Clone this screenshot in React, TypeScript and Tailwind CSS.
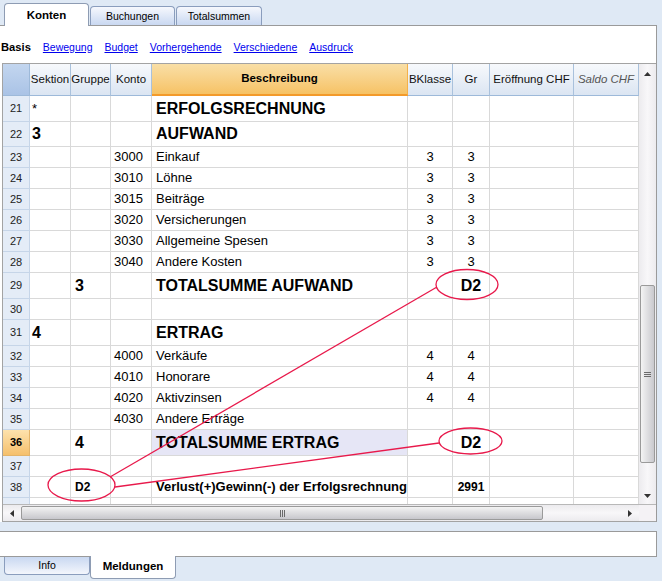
type Row = {
  n: number;
  h: string;
  sek?: string;
  grp?: string;
  konto?: string;
  besch?: string;
  bk?: string;
  gr?: string;
  big?: boolean;
  bold?: boolean;
  active?: boolean;
};

const rows: Row[] = [
  { n: 21, h: 'h-[26px]', sek: '*', besch: 'ERFOLGSRECHNUNG', big: true },
  { n: 22, h: 'h-[25px]', sek: '3', besch: 'AUFWAND', big: true },
  { n: 23, h: 'h-[21px]', konto: '3000', besch: 'Einkauf', bk: '3', gr: '3' },
  { n: 24, h: 'h-[21px]', konto: '3010', besch: 'Löhne', bk: '3', gr: '3' },
  { n: 25, h: 'h-[21px]', konto: '3015', besch: 'Beiträge', bk: '3', gr: '3' },
  { n: 26, h: 'h-[21px]', konto: '3020', besch: 'Versicherungen', bk: '3', gr: '3' },
  { n: 27, h: 'h-[21px]', konto: '3030', besch: 'Allgemeine Spesen', bk: '3', gr: '3' },
  { n: 28, h: 'h-[21px]', konto: '3040', besch: 'Andere Kosten', bk: '3', gr: '3' },
  { n: 29, h: 'h-[26px]', grp: '3', besch: 'TOTALSUMME AUFWAND', gr: 'D2', big: true },
  { n: 30, h: 'h-[21px]' },
  { n: 31, h: 'h-[26px]', sek: '4', besch: 'ERTRAG', big: true },
  { n: 32, h: 'h-[21px]', konto: '4000', besch: 'Verkäufe', bk: '4', gr: '4' },
  { n: 33, h: 'h-[21px]', konto: '4010', besch: 'Honorare', bk: '4', gr: '4' },
  { n: 34, h: 'h-[21px]', konto: '4020', besch: 'Aktivzinsen', bk: '4', gr: '4' },
  { n: 35, h: 'h-[21px]', konto: '4030', besch: 'Andere Erträge' },
  { n: 36, h: 'h-[26px]', grp: '4', besch: 'TOTALSUMME ERTRAG', gr: 'D2', big: true, active: true },
  { n: 37, h: 'h-[21px]' },
  { n: 38, h: 'h-[21px]', grp: 'D2', besch: 'Verlust(+)Gewinn(-) der Erfolgsrechnung', gr: '2991', bold: true },
];

const line = 'border-r border-b border-[#d9d9d9]';

function Arrow({ dir }: { dir: 'up' | 'down' | 'left' | 'right' }) {
  const pts = {
    up: '0,4 3.5,0 7,4',
    down: '0,0 3.5,4 7,0',
    left: '4,0 0,3.5 4,7',
    right: '0,0 4,3.5 0,7',
  }[dir];
  const vert = dir === 'up' || dir === 'down';
  return (
    <svg width={vert ? 7 : 4} height={vert ? 4 : 7}>
      <polygon points={pts} fill="#333" />
    </svg>
  );
}

function DataRow({ r }: { r: Row }) {
  const big = r.big ? 'text-[16px] font-bold' : r.bold ? 'text-[13px] font-bold' : 'text-[13px]';
  const small = r.bold ? 'text-[12px] font-bold' : big;
  return (
    <div className={`flex shrink-0 ${r.h}`}>
      <div
        className={`w-[27px] shrink-0 flex items-center justify-center border-r border-b text-[11px] ${
          r.active
            ? 'bg-gradient-to-b from-[#fde2ad] to-[#f5c06c] border-[#e3b46a] font-bold'
            : 'bg-[#e4ecf7] border-[#c6d5e8] text-[#222]'
        }`}
      >
        {r.n}
      </div>
      <div className={`w-[41px] shrink-0 flex items-center pl-[2px] ${line} ${r.sek === '*' ? 'text-[13px]' : big}`}>{r.sek}</div>
      <div className={`w-[40px] shrink-0 flex items-center pl-[4px] ${line} ${small}`}>{r.grp}</div>
      <div className={`w-[41px] shrink-0 flex items-center pl-[3px] ${line} text-[13px]`}>{r.konto}</div>
      <div className={`w-[256px] shrink-0 flex items-center pl-[4px] whitespace-nowrap ${line} ${big} ${r.active ? 'bg-[#e6e6f6]' : ''}`}>
        {r.besch}
      </div>
      <div className={`w-[45px] shrink-0 flex items-center justify-center ${line} text-[13px]`}>{r.bk}</div>
      <div className={`w-[37px] shrink-0 flex items-center justify-center ${line} ${small}`}>{r.gr}</div>
      <div className={`w-[84px] shrink-0 ${line}`} />
      <div className={`w-[65px] shrink-0 ${line}`} />
    </div>
  );
}

// partially visible row under the last one, cut by the scrollbar
function EmptyRow() {
  return (
    <div className="flex shrink-0 h-[21px]">
      <div className="w-[27px] shrink-0 bg-[#e4ecf7] border-r border-b border-[#c6d5e8]" />
      <div className={`w-[41px] shrink-0 ${line}`} />
      <div className={`w-[40px] shrink-0 ${line}`} />
      <div className={`w-[41px] shrink-0 ${line}`} />
      <div className={`w-[256px] shrink-0 ${line}`} />
      <div className={`w-[45px] shrink-0 ${line}`} />
      <div className={`w-[37px] shrink-0 ${line}`} />
      <div className={`w-[84px] shrink-0 ${line}`} />
      <div className={`w-[65px] shrink-0 ${line}`} />
    </div>
  );
}

const headers = [
  { label: 'Sektion', w: 'w-[41px]' },
  { label: 'Gruppe', w: 'w-[40px]' },
  { label: 'Konto', w: 'w-[41px]' },
  { label: 'Beschreibung', w: 'w-[256px]' },
  { label: 'BKlasse', w: 'w-[45px]' },
  { label: 'Gr', w: 'w-[37px]' },
  { label: 'Eröffnung CHF', w: 'w-[84px]' },
  { label: 'Saldo CHF', w: 'w-[65px]' },
];

function Header() {
  return (
    <div className="flex h-[32px] shrink-0 text-[11.5px]">
      <div className="w-[27px] shrink-0 bg-gradient-to-b from-[#c3d6ef] to-[#aac3e6] border-r border-b border-[#9db9d9]" />
      {headers.map((h) =>
        h.label === 'Beschreibung' ? (
          <div
            key={h.label}
            className={`${h.w} shrink-0 flex items-center justify-center font-bold bg-gradient-to-b from-[#f9dfa6] to-[#f6c264] border-r border-b-2 border-r-[#f3b14a] border-b-[#f39a2a]`}
          >
            {h.label}
          </div>
        ) : (
          <div
            key={h.label}
            className={`${h.w} shrink-0 flex items-center justify-center whitespace-nowrap bg-gradient-to-b from-[#f7f9fc] to-[#dbe5f2] border-r border-b border-r-[#a9c1dc] border-b-[#9db9d9] ${
              h.label === 'Saldo CHF' ? 'italic text-[#555]' : 'text-[#111]'
            }`}
          >
            {h.label}
          </div>
        )
      )}
    </div>
  );
}

function VScroll() {
  return (
    <div className="w-[17px] shrink-0 flex flex-col bg-gradient-to-r from-[#ecebee] via-[#f8f7f9] to-[#ecebee]">
      <div className="h-[17px] shrink-0 flex items-center justify-center pt-[2px]">
        <Arrow dir="up" />
      </div>
      <div className="h-[204px] shrink-0" />
      <div className="h-[178px] shrink-0 mx-[1px] rounded-[2px] border border-[#9a9a9a] bg-gradient-to-r from-[#f4f4f4] to-[#c9c9ce] flex flex-col items-center justify-center gap-[1px]">
        <div className="w-[7px] h-[1px] bg-[#6b6b6b]" />
        <div className="w-[7px] h-[1px] bg-[#6b6b6b]" />
        <div className="w-[7px] h-[1px] bg-[#6b6b6b]" />
      </div>
      <div className="flex-1" />
      <div className="h-[17px] shrink-0 flex items-center justify-center">
        <Arrow dir="down" />
      </div>
    </div>
  );
}

function HScroll() {
  return (
    <div className="flex h-[17px] shrink-0 border-t border-[#b8b8b8] bg-gradient-to-b from-[#ecebee] via-[#f8f7f9] to-[#ecebee]">
      <div className="w-[18px] shrink-0 flex items-center justify-center">
        <Arrow dir="left" />
      </div>
      <div className="w-[522px] shrink-0 my-[1px] rounded-[2px] border border-[#9a9a9a] bg-gradient-to-b from-[#f3f3f3] to-[#c7c7cc] flex items-center justify-center gap-[1px]">
        <div className="w-[1px] h-[7px] bg-[#6b6b6b]" />
        <div className="w-[1px] h-[7px] bg-[#6b6b6b]" />
        <div className="w-[1px] h-[7px] bg-[#6b6b6b]" />
      </div>
      <div className="flex-1" />
      <div className="w-[18px] shrink-0 flex items-center justify-center">
        <Arrow dir="right" />
      </div>
      <div className="w-[17px] shrink-0 bg-[#f4f2f5]" />
    </div>
  );
}

export default function App() {
  return (
    <div className="relative w-[662px] h-[581px] overflow-hidden bg-[#dfe9f5] font-['Liberation_Sans',Arial,sans-serif] text-black flex flex-col">
      {/* top tabs */}
      <div className="h-[25px] shrink-0 flex items-end pl-[4px] gap-[1px]">
        <div className="relative z-10 w-[85px] h-[23px] -mb-[1px] bg-white border border-b-0 border-[#8e9cb3] rounded-t-[4px] flex items-center justify-center pt-[1px] text-[11.5px] font-bold">
          Konten
        </div>
        <div className="w-[85px] h-[19px] bg-gradient-to-b from-[#f6f8fd] to-[#c9d8f1] border border-b-0 border-[#8a9dbd] rounded-t-[4px] flex items-center justify-center pt-[2px] text-[10.5px]">
          Buchungen
        </div>
        <div className="w-[86px] h-[19px] bg-gradient-to-b from-[#f6f8fd] to-[#c9d8f1] border border-b-0 border-[#8a9dbd] rounded-t-[4px] flex items-center justify-center pt-[2px] text-[10.5px]">
          Totalsummen
        </div>
      </div>

      {/* main panel */}
      <div className="w-[657px] h-[497px] shrink-0 bg-white border-t border-r border-[#9a9a9a] flex flex-col">
        <div className="h-[37px] shrink-0 flex items-center gap-[12px] pl-[1px] pt-[6px] text-[10.5px]">
          <span className="font-bold text-[11.2px]">Basis</span>
          <span className="text-[#0000ee] underline">Bewegung</span>
          <span className="text-[#0000ee] underline">Budget</span>
          <span className="text-[#0000ee] underline">Vorhergehende</span>
          <span className="text-[#0000ee] underline">Verschiedene</span>
          <span className="text-[#0000ee] underline">Ausdruck</span>
        </div>

        <div className="ml-[2px] h-[459px] shrink-0 border-l border-t border-b border-[#a3a3a3] flex flex-col">
          <div className="flex h-[440px] shrink-0">
            <div className="w-[636px] shrink-0 flex flex-col overflow-hidden">
              <Header />
              <div className="flex-1 overflow-hidden flex flex-col">
                {rows.map((r) => (
                  <DataRow key={r.n} r={r} />
                ))}
                <EmptyRow />
              </div>
            </div>
            <VScroll />
          </div>
          <HScroll />
        </div>
      </div>

      <div className="h-[9px] shrink-0" />

      {/* message box */}
      <div className="w-[657px] h-[26px] shrink-0 bg-white border-t border-b border-r border-[#9a9a9a]" />

      {/* bottom tabs */}
      <div className="h-[24px] shrink-0 flex items-start pl-[4px]">
        <div className="w-[86px] h-[18px] bg-gradient-to-b from-[#c9d8f1] to-[#f3f6fc] border border-t-0 border-[#8a9dbd] rounded-b-[4px] flex items-center justify-center text-[10.5px]">
          Info
        </div>
        <div className="relative z-10 w-[86px] h-[23px] -mt-[1px] bg-white border border-t-0 border-[#8e9cb3] rounded-b-[4px] flex items-center justify-center text-[11.5px] font-bold">
          Meldungen
        </div>
      </div>

      {/* annotations */}
      <svg className="absolute inset-0 pointer-events-none" width="662" height="581">
        <g fill="none" stroke="#e8194b" strokeWidth="1.3">
          <ellipse cx="467" cy="284.5" rx="31" ry="15" />
          <ellipse cx="470.5" cy="441" rx="31.5" ry="13" />
          <ellipse cx="81.5" cy="485" rx="33.5" ry="16" />
          <line x1="110" y1="477" x2="437" y2="287" />
          <line x1="115" y1="487" x2="439" y2="443" />
        </g>
      </svg>
    </div>
  );
}
